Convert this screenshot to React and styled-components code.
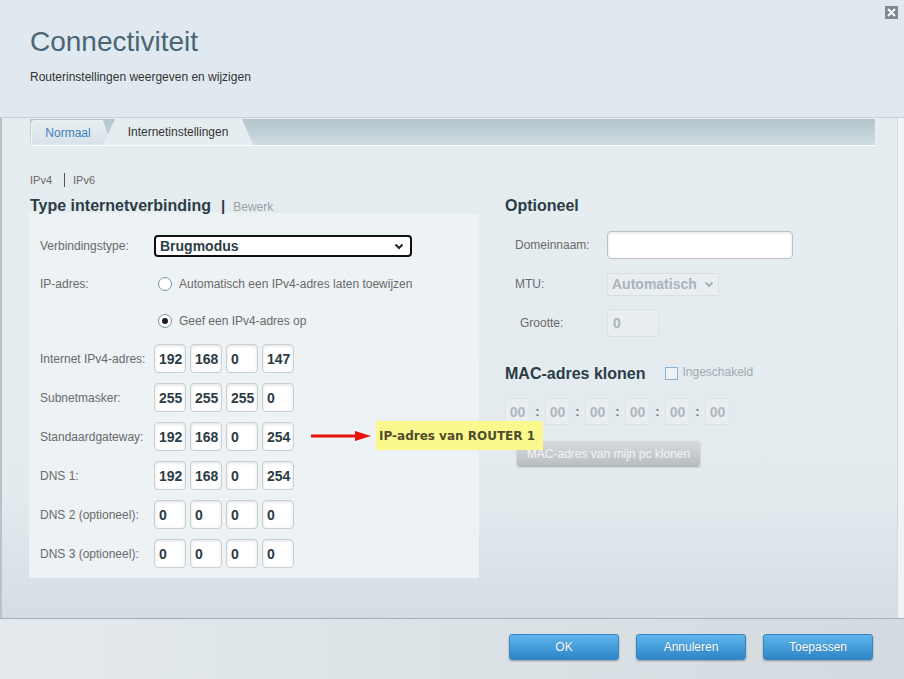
import React from 'react';
import styled, { createGlobalStyle, css } from 'styled-components';

const GlobalStyle = createGlobalStyle`
  html, body {
    margin: 0;
    padding: 0;
  }
  body {
    font-family: "Liberation Sans", Arial, sans-serif;
    background: #eef3f5;
  }
  * {
    box-sizing: border-box;
  }
`;

const Window = styled.div`
  width: 904px;
  height: 679px;
  display: flex;
  flex-direction: column;
  overflow: hidden;
  background: #eef3f5;
`;

const Header = styled.header`
  height: 118px;
  flex-shrink: 0;
  display: flex;
  justify-content: space-between;
  align-items: flex-start;
  background: #dfe9ef;
  border-bottom: 1px solid #c6d0d5;
`;

const TitleBlock = styled.div`
  padding: 26px 0 0 30px;
`;

const Title = styled.h1`
  margin: 0;
  font-size: 28px;
  line-height: 32px;
  font-weight: normal;
  color: #4b6574;
`;

const Subtitle = styled.p`
  margin: 12px 0 0;
  font-size: 12px;
  line-height: 14px;
  color: #333;
`;

const CloseButton = styled.button`
  margin: 6px 6px 0 0;
  padding: 0;
  width: 13px;
  height: 13px;
  border: none;
  background: none;
  display: flex;
`;

const Body = styled.main`
  flex: 1;
  position: relative;
  margin-right: 6px;
  border-left: 2px solid #b8c3c9;
  border-right: 1px solid #d2dadf;
  padding: 1px 0 0 28px;
  background: linear-gradient(#e6edf1 0%, #e4ebef 75%, #d3dde3 100%);
`;

const TabBar = styled.div`
  height: 27px;
  margin-right: 22px;
  display: flex;
  align-items: flex-end;
  padding-left: 1px;
  border-bottom: 1px solid #fbfdfe;
  background: linear-gradient(#b3c4cb, #d0dde3);
`;

const Tab = styled.div`
  height: 25px;
  display: flex;
  align-items: center;
  justify-content: center;
  font-size: 12px;
  ${(p) =>
    p.$active
      ? css`
          width: 150px;
          height: 26px;
          margin-left: -8px;
          color: #333;
          background: #e6edf1;
          clip-path: polygon(12px 0, calc(100% - 11px) 0, 100% 100%, 0 100%);
        `
      : css`
          width: 80px;
          padding-right: 7px;
          color: #3b7fbf;
          border-radius: 4px 6px 0 0;
          border-left: 1px solid #f2f6f8;
          background: linear-gradient(#e9eff2, #d8e2e7);
          clip-path: polygon(0 0, 72px 0, 100% 100%, 0 100%);
        `}
`;

const SubNav = styled.nav`
  margin-top: 27px;
  height: 14px;
  display: flex;
  align-items: center;
  font-size: 11px;
  color: #666;
`;

const NavDivider = styled.span`
  width: 1px;
  height: 14px;
  margin: 0 8px 0 12px;
  background: #555;
`;

const Columns = styled.div`
  margin-top: 9px;
  display: flex;
  gap: 26px;
`;

const LeftColumn = styled.section`
  width: 449px;
`;

const RightColumn = styled.section`
  flex: 1;
  display: flex;
  flex-direction: column;
  align-items: flex-start;
`;

const Heading = styled.h2`
  margin: 0;
  height: 17px;
  font-size: 16px;
  line-height: 20px;
  font-weight: bold;
  color: #2b3c46;
  display: flex;
  align-items: baseline;
  white-space: nowrap;
`;

const Pipe = styled.span`
  margin-left: 10px;
  font-size: 15px;
`;

const EditLink = styled.span`
  margin-left: 8px;
  font-size: 12px;
  font-weight: normal;
  color: #9aa3a8;
`;

const Panel = styled.div`
  margin-left: -1px;
  width: 450px;
  height: 365px;
  padding: 14px 0 0 11px;
  background: #edf2f5;
`;

const Row = styled.div`
  position: relative;
  display: flex;
  align-items: center;
  height: ${(p) => p.$h}px;
`;

const Label = styled.span`
  width: ${(p) => p.$w || 114}px;
  padding-left: ${(p) => p.$indent || 0}px;
  flex-shrink: 0;
  font-size: 12px;
  color: #6a6a6a;
`;

const SelectBox = styled.div`
  width: 258px;
  height: 22px;
  display: flex;
  align-items: center;
  justify-content: space-between;
  padding: 0 6px 0 4px;
  border: 2px solid #111;
  border-radius: 4px;
  background: #fff;
  font-size: 14px;
  font-weight: bold;
  color: #2b3c46;
`;

const Radio = styled.span`
  width: 14px;
  height: 14px;
  margin: 0 7px 0 4px;
  border-radius: 50%;
  border: 1px solid #7b93a4;
  background: #fff;
  display: flex;
  align-items: center;
  justify-content: center;
  &::after {
    content: '';
    width: 6px;
    height: 6px;
    border-radius: 50%;
    background: ${(p) => (p.$checked ? '#1d1d1d' : 'transparent')};
  }
`;

const RadioText = styled.span`
  font-size: 12px;
  color: #6a6a6a;
`;

const Octets = styled.div`
  display: flex;
  gap: 4px;
`;

const OctetBox = styled.div`
  width: 32px;
  height: 29px;
  display: flex;
  align-items: center;
  padding-left: 4px;
  border: 1px solid #c8d0d5;
  border-radius: 4px;
  background: #fff;
  box-shadow: inset 0 1px 3px rgba(0, 0, 0, 0.13);
  font-size: 14px;
  font-weight: bold;
  color: #2b3c46;
`;

const Annotation = styled.div`
  position: absolute;
  left: 271px;
  top: 4px;
  z-index: 2;
  display: flex;
  align-items: center;
`;

const Note = styled.div`
  margin-left: 5px;
  height: 29px;
  display: flex;
  align-items: center;
  padding: 0 8px 0 3px;
  background: #fbf98e;
  font-family: "DejaVu Sans", Verdana, sans-serif;
  font-size: 12px;
  font-weight: bold;
  color: #4f4d2d;
  white-space: nowrap;
`;

const FieldRow = styled.div`
  display: flex;
  align-items: center;
  height: ${(p) => p.$h}px;
  padding-left: 10px;
  margin-top: ${(p) => p.$mt || 0}px;
`;

const TextInput = styled.div`
  width: ${(p) => p.$w}px;
  height: 28px;
  display: flex;
  align-items: center;
  padding-left: 5px;
  border: 1px solid ${(p) => (p.$disabled ? '#d9e0e4' : '#b7c1c7')};
  border-radius: 4px;
  background: ${(p) => (p.$disabled ? '#e8eef1' : '#fff')};
  box-shadow: ${(p) => (p.$disabled ? 'none' : 'inset 0 1px 3px rgba(0,0,0,0.12)')};
  font-size: 14px;
  font-weight: bold;
  color: #abb5bb;
`;

const DisabledSelect = styled.div`
  width: 112px;
  height: 23px;
  display: flex;
  align-items: center;
  justify-content: space-between;
  padding: 0 4px 0 4px;
  border: 1px solid #d9e0e4;
  border-radius: 2px;
  background: #e8eef1;
  font-size: 14px;
  font-weight: bold;
  color: #aab4ba;
`;

const MacHeading = styled.div`
  margin-top: 21px;
  height: 18px;
  display: flex;
  align-items: center;
`;

const Checkbox = styled.span`
  width: 13px;
  height: 13px;
  margin: 2px 4px 0 20px;
  border: 1px solid #86b2d3;
  background: #edf2f5;
`;

const CheckLabel = styled.span`
  font-size: 12px;
  color: #a1aaaf;
`;

const MacRow = styled.div`
  margin-top: 17px;
  display: flex;
  align-items: center;
`;

const MacBox = styled.div`
  width: 25px;
  height: 27px;
  display: flex;
  align-items: center;
  justify-content: center;
  border: 1px solid #dce2e6;
  border-radius: 2px;
  background: #e8eef1;
  font-size: 14px;
  font-weight: bold;
  color: #afb8be;
`;

const Colon = styled.span`
  width: 15px;
  text-align: center;
  font-size: 13px;
  font-weight: bold;
  color: #6a7378;
`;

const GreyButton = styled.button`
  margin: 16px 0 0 12px;
  width: 183px;
  height: 25px;
  border: none;
  border-radius: 3px;
  background: linear-gradient(#d8dbdd, #b8bdc0);
  box-shadow: 0 1px 2px rgba(0, 0, 0, 0.3);
  font-family: inherit;
  font-size: 12px;
  color: #f3f5f6;
`;

const Footer = styled.footer`
  height: 61px;
  flex-shrink: 0;
  display: flex;
  justify-content: flex-end;
  align-items: flex-start;
  gap: 17px;
  padding: 15px 31px 0 0;
  border-top: 1px solid #a5b0b6;
  background: linear-gradient(90deg, #e4eaed, #d3dbe0);
`;

const BlueButton = styled.button`
  width: 110px;
  height: 26px;
  border: 1px solid #3a86c2;
  border-radius: 3px;
  background: linear-gradient(#5fb6ec, #2d85c7);
  box-shadow: 0 1px 2px rgba(0, 0, 0, 0.35);
  font-family: inherit;
  font-size: 12px;
  color: #fff;
  text-shadow: 0 0 1px rgba(0, 0, 0, 0.25);
`;

const Chevron = ({ color = '#222' }) => (
  <svg width="10" height="7" viewBox="0 0 10 7">
    <path d="M1.5 1.5 L5 5 L8.5 1.5" fill="none" stroke={color} strokeWidth="2" />
  </svg>
);

const CloseIcon = () => (
  <svg width="13" height="13" viewBox="0 0 13 13">
    <rect width="13" height="13" fill="#7c898f" />
    <path d="M3 3 L10 10 M10 3 L3 10" stroke="#fff" strokeWidth="2" />
  </svg>
);

const Arrow = () => (
  <svg width="60" height="12" viewBox="0 0 60 12">
    <line x1="0" y1="6" x2="46" y2="6" stroke="#e8120c" strokeWidth="3" />
    <polygon points="44,1 60,6 44,11" fill="#e8120c" />
  </svg>
);

const ipRows = [
  { label: 'Internet IPv4-adres:', values: ['192', '168', '0', '147'] },
  { label: 'Subnetmasker:', values: ['255', '255', '255', '0'] },
  { label: 'Standaardgateway:', values: ['192', '168', '0', '254'], note: 'IP-adres van ROUTER 1' },
  { label: 'DNS 1:', values: ['192', '168', '0', '254'] },
  { label: 'DNS 2 (optioneel):', values: ['0', '0', '0', '0'] },
  { label: 'DNS 3 (optioneel):', values: ['0', '0', '0', '0'] },
];

const App = () => {
  return (
    <Window>
      <GlobalStyle />
      <Header>
        <TitleBlock>
          <Title>Connectiviteit</Title>
          <Subtitle>Routerinstellingen weergeven en wijzigen</Subtitle>
        </TitleBlock>
        <CloseButton aria-label="Sluiten">
          <CloseIcon />
        </CloseButton>
      </Header>

      <Body>
        <TabBar>
          <Tab>Normaal</Tab>
          <Tab $active>Internetinstellingen</Tab>
        </TabBar>

        <SubNav>
          <span>IPv4</span>
          <NavDivider />
          <span>IPv6</span>
        </SubNav>

        <Columns>
          <LeftColumn>
            <Heading>
              Type internetverbinding
              <Pipe>|</Pipe>
              <EditLink>Bewerk</EditLink>
            </Heading>
            <Panel>
              <Row $h={38}>
                <Label>Verbindingstype:</Label>
                <SelectBox>
                  Brugmodus
                  <Chevron />
                </SelectBox>
              </Row>
              <Row $h={38}>
                <Label>IP-adres:</Label>
                <Radio />
                <RadioText>Automatisch een IPv4-adres laten toewijzen</RadioText>
              </Row>
              <Row $h={36}>
                <Label />
                <Radio $checked />
                <RadioText>Geef een IPv4-adres op</RadioText>
              </Row>
              {ipRows.map((r) => (
                <Row $h={39} key={r.label}>
                  <Label>{r.label}</Label>
                  <Octets>
                    {r.values.map((v, i) => (
                      <OctetBox key={i}>{v}</OctetBox>
                    ))}
                  </Octets>
                  {r.note && (
                    <Annotation>
                      <Arrow />
                      <Note>{r.note}</Note>
                    </Annotation>
                  )}
                </Row>
              ))}
            </Panel>
          </LeftColumn>

          <RightColumn>
            <Heading>Optioneel</Heading>
            <FieldRow $h={38} $mt={13}>
              <Label $w={92}>Domeinnaam:</Label>
              <TextInput $w={186} />
            </FieldRow>
            <FieldRow $h={40}>
              <Label $w={92}>MTU:</Label>
              <DisabledSelect>
                Automatisch
                <Chevron color="#aab4ba" />
              </DisabledSelect>
            </FieldRow>
            <FieldRow $h={38}>
              <Label $w={92} $indent={5}>Grootte:</Label>
              <TextInput $w={52} $disabled>0</TextInput>
            </FieldRow>

            <MacHeading>
              <Heading as="h3">MAC-adres klonen</Heading>
              <Checkbox />
              <CheckLabel>Ingeschakeld</CheckLabel>
            </MacHeading>
            <MacRow>
              {[0, 1, 2, 3, 4, 5].map((i) => (
                <React.Fragment key={i}>
                  {i > 0 && <Colon>:</Colon>}
                  <MacBox>00</MacBox>
                </React.Fragment>
              ))}
            </MacRow>
            <GreyButton disabled>MAC-adres van mijn pc klonen</GreyButton>
          </RightColumn>
        </Columns>
      </Body>

      <Footer>
        <BlueButton>OK</BlueButton>
        <BlueButton>Annuleren</BlueButton>
        <BlueButton>Toepassen</BlueButton>
      </Footer>
    </Window>
  );
};

export default App;
